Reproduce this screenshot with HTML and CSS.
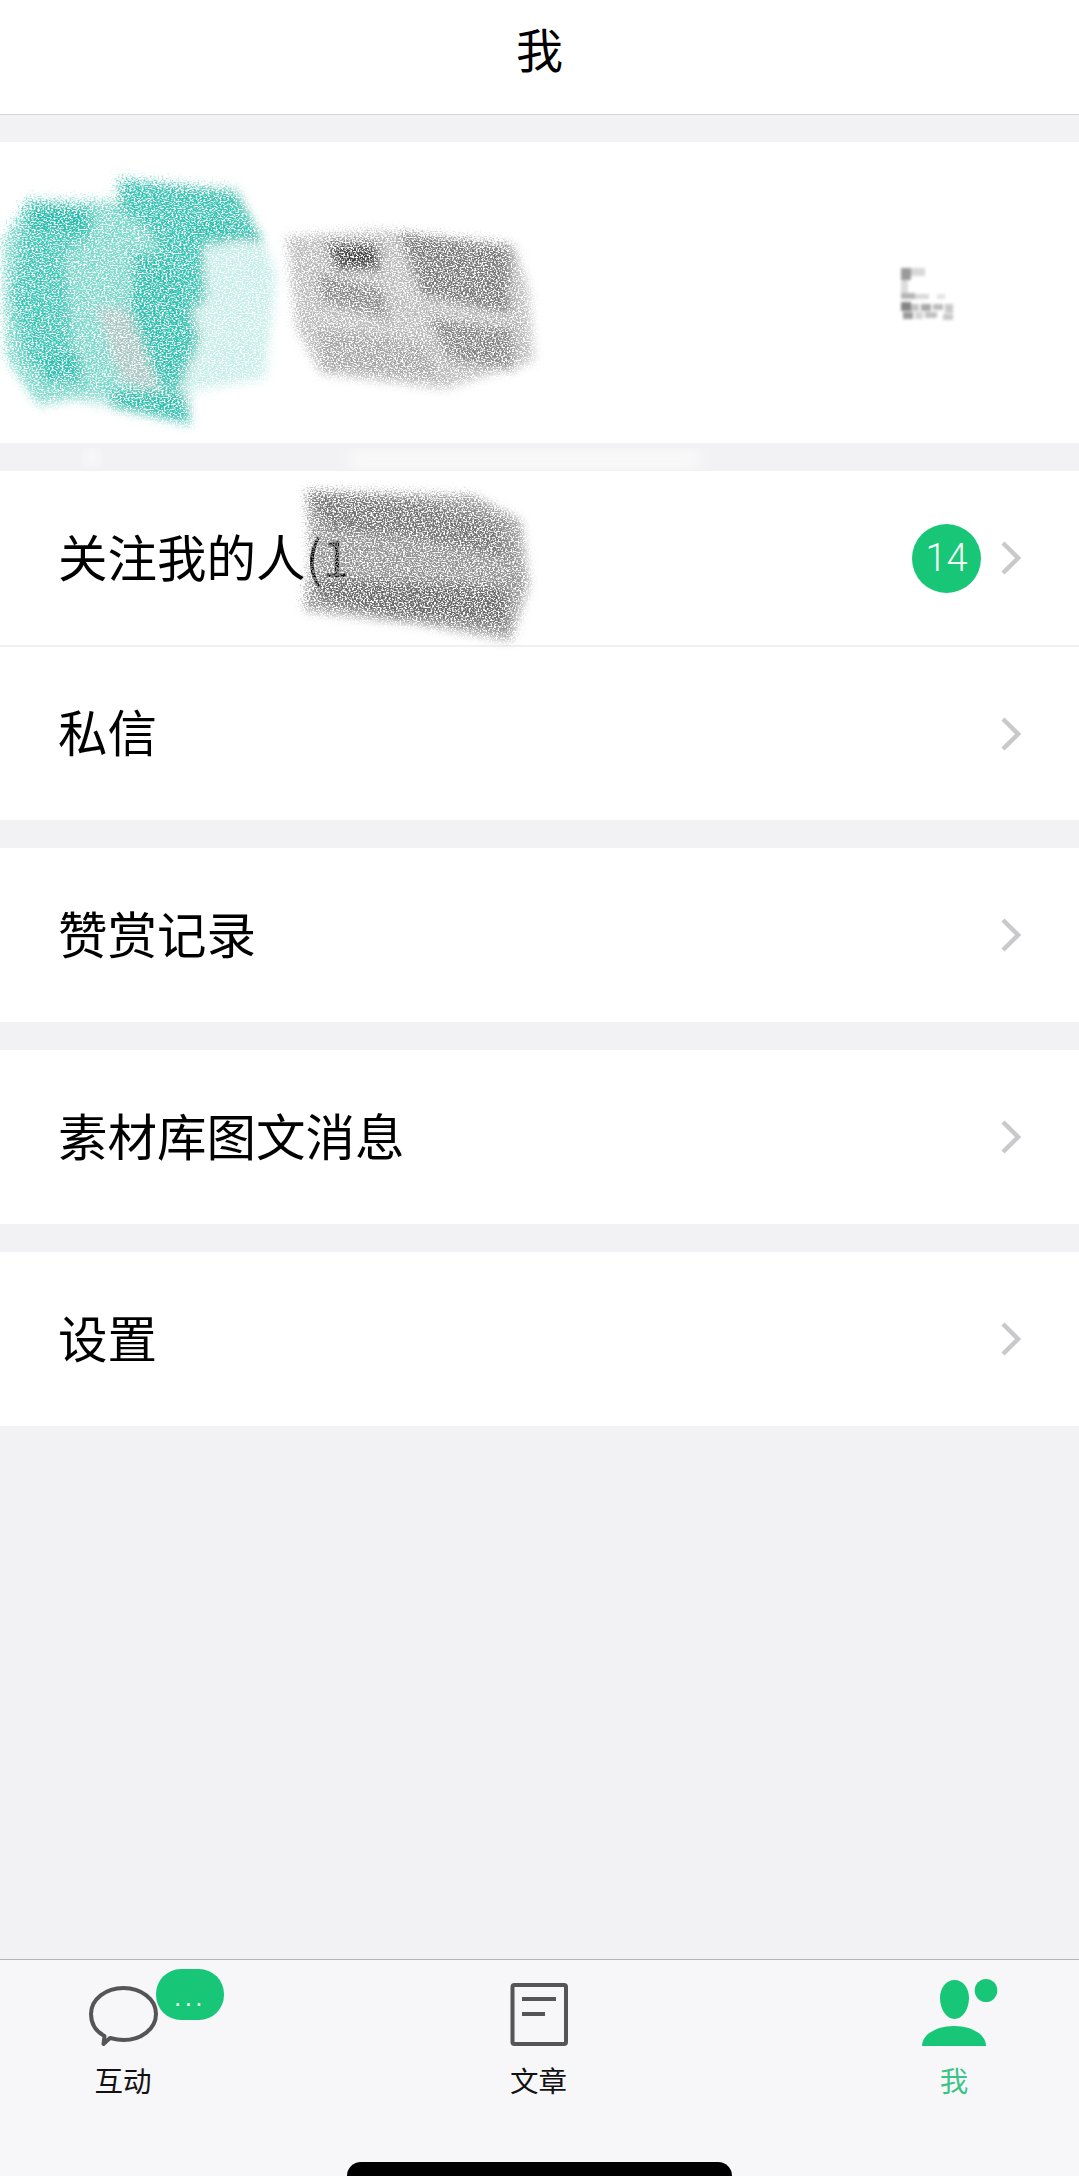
FILE: index.html
```html
<!DOCTYPE html>
<html lang="zh">
<head>
<meta charset="utf-8">
<title>我</title>
<link rel="stylesheet" href="styles.css">
</head>
<body>
<div class="page">
  <header class="topbar">我</header>
  <main class="content">
    <section class="group profile">
      <svg class="mosaic" width="54" height="52" viewBox="0 0 54 52" aria-hidden="true">
        <rect x="0" y="0" width="10" height="12" fill="#9a9a9a"/><rect x="10" y="0" width="14" height="8" fill="#d8d8d8"/>
        <rect x="0" y="12" width="7" height="14" fill="#dcdcdc"/><rect x="0" y="25" width="14" height="6" fill="#b4b4b4"/>
        <rect x="14" y="26" width="14" height="5" fill="#d8d8d8"/><rect x="36" y="26" width="8" height="5" fill="#e2e2e2"/>
        <rect x="0" y="34" width="10" height="9" fill="#858585"/><rect x="10" y="36" width="8" height="7" fill="#c4c4c4"/>
        <rect x="20" y="36" width="10" height="7" fill="#a8a8a8"/><rect x="32" y="36" width="10" height="6" fill="#bbb"/>
        <rect x="44" y="36" width="8" height="9" fill="#c8c8c8"/><rect x="2" y="44" width="10" height="7" fill="#9a9a9a"/>
        <rect x="14" y="44" width="8" height="7" fill="#d4d4d4"/><rect x="24" y="44" width="12" height="6" fill="#c0c0c0"/>
        <rect x="42" y="46" width="10" height="6" fill="#c8c8c8"/>
      </svg>
    </section>
    <section class="group">
      <div class="row">
        <span class="row-title">关注我的人(1</span>
        <span class="count">14</span>
        <svg class="chev" width="22" height="36" viewBox="0 0 22 36" aria-hidden="true"><path d="M3 3 L18 18 L3 33"/></svg>
      </div>
      <div class="row row-next">
        <span class="row-title">私信</span>
        <svg class="chev" width="22" height="36" viewBox="0 0 22 36" aria-hidden="true"><path d="M3 3 L18 18 L3 33"/></svg>
      </div>
    </section>
    <section class="group">
      <div class="row">
        <span class="row-title">赞赏记录</span>
        <svg class="chev" width="22" height="36" viewBox="0 0 22 36" aria-hidden="true"><path d="M3 3 L18 18 L3 33"/></svg>
      </div>
    </section>
    <section class="group">
      <div class="row">
        <span class="row-title">素材库图文消息</span>
        <svg class="chev" width="22" height="36" viewBox="0 0 22 36" aria-hidden="true"><path d="M3 3 L18 18 L3 33"/></svg>
      </div>
    </section>
    <section class="group">
      <div class="row">
        <span class="row-title">设置</span>
        <svg class="chev" width="22" height="36" viewBox="0 0 22 36" aria-hidden="true"><path d="M3 3 L18 18 L3 33"/></svg>
      </div>
    </section>
  </main>
  <nav class="tabbar">
    <div class="tabs">
      <div class="tab">
        <svg class="tab-icon" width="90" height="70" viewBox="0 0 90 70" aria-hidden="true">
          <path class="line" d="M26.5 58 C17 53 13 45 13 36 C13 21 28 10 45.5 10 C63 10 78 21 78 36 C78 51 63 62 45.5 62 C40 62 36 61 32 60 L25.5 66 Z"/>
        </svg>
        <span class="tab-label">互动</span>
        <span class="pill">...</span>
      </div>
      <div class="tab">
        <svg class="tab-icon" width="90" height="70" viewBox="0 0 90 70" aria-hidden="true">
          <rect class="line" x="18.5" y="7" width="53.5" height="59" rx="2"/>
          <path class="line" d="M28 21 H62 M28 36 H51"/>
        </svg>
        <span class="tab-label">文章</span>
      </div>
      <div class="tab tab-active">
        <svg class="tab-icon" width="90" height="70" viewBox="0 0 90 70" aria-hidden="true">
          <path class="solid" d="M45.5 2 C54 2 60 10 60 20 C60 32 53 41 45.5 41 C38 41 31 32 31 20 C31 10 37 2 45.5 2 Z"/>
          <ellipse class="solid" cx="77" cy="12.5" rx="11.3" ry="11.5"/>
          <path class="solid" d="M13 68 C13 56 28 48 45 48 C62 48 77 56 77 68 Z"/>
        </svg>
        <span class="tab-label">我</span>
      </div>
    </div>
    <div class="home-bar"></div>
  </nav>
  <svg class="scribbles" width="1079" height="660" viewBox="0 0 1079 660" aria-hidden="true">
    <defs>
      <filter id="crayon-teal" x="0" y="150" width="330" height="310" filterUnits="userSpaceOnUse">
        <feGaussianBlur in="SourceGraphic" stdDeviation="5" result="b"/>
        <feTurbulence type="fractalNoise" baseFrequency="0.5 0.75" numOctaves="2" seed="4" result="n"/>
        <feDisplacementMap in="b" in2="n" scale="22" result="d"/>
        <feColorMatrix in="n" type="matrix" values="0 0 0 0 0  0 0 0 0 0  0 0 0 0 0  0 0 0 5 -1.75" result="m"/>
        <feComposite in="d" in2="m" operator="in"/>
      </filter>
      <filter id="crayon-gray" x="260" y="200" width="300" height="460" filterUnits="userSpaceOnUse">
        <feGaussianBlur in="SourceGraphic" stdDeviation="5" result="b"/>
        <feTurbulence type="fractalNoise" baseFrequency="0.55 0.8" numOctaves="2" seed="9" result="n"/>
        <feDisplacementMap in="b" in2="n" scale="20" result="d"/>
        <feColorMatrix in="n" type="matrix" values="0 0 0 0 0  0 0 0 0 0  0 0 0 0 0  0 0 0 5 -1.75" result="m"/>
        <feComposite in="d" in2="m" operator="in"/>
      </filter>
      <filter id="soft"><feGaussianBlur stdDeviation="7"/></filter>
    </defs>
    <rect class="smear" x="350" y="450" width="350" height="18" filter="url(#soft)"/>
    <rect class="smear" x="84" y="450" width="16" height="16" filter="url(#soft)"/>
    <g filter="url(#crayon-teal)">
      <path fill="#c6eee8" d="M5 240 L30 200 L115 200 L120 180 L238 188 L262 235 L278 275 L266 380 L195 392 L188 425 L72 402 L38 410 L36 382 L8 362 L2 300 Z"/>
      <path fill="#79d9cc" d="M5 240 L30 200 L120 205 L150 235 L190 340 L180 400 L72 400 L38 405 L8 360 Z"/>
      <path fill="#3cc7b7" d="M30 205 L95 210 L92 240 L66 255 L76 380 L30 368 L14 300 Z"/>
      <path fill="#35c5b4" d="M120 180 L238 192 L262 238 L205 248 L208 300 L184 322 L150 232 L120 212 Z"/>
      <path fill="#2ec1b0" d="M136 252 L176 262 L202 340 L180 392 L162 388 L132 312 Z"/>
      <path fill="#1cbbaa" d="M30 208 L90 212 L88 234 L35 228 Z"/>
      <path fill="#22bdac" d="M188 222 L264 238 L262 244 L200 236 Z"/>
      <path fill="#2cc1b0" d="M40 355 L80 355 L85 385 L45 385 Z"/>
      <path fill="#2cc0af" d="M115 392 L188 395 L192 426 L110 408 Z"/>
      <path fill="#a9c7c3" d="M98 308 L130 312 L160 392 L122 382 Z"/>
    </g>
    <g filter="url(#crayon-gray)">
      <path fill="#bcbcbc" d="M288 238 L385 232 L515 245 L530 290 L535 362 L445 390 L322 375 L298 330 Z"/>
      <path fill="#7a7a7a" d="M400 234 L512 248 L512 315 L425 298 Z"/>
      <path fill="#858585" d="M430 320 L515 330 L515 372 L450 362 Z"/>
      <path fill="#444" d="M328 245 L380 245 L382 272 L338 272 Z"/>
      <path fill="#8a8a8a" d="M318 275 L385 290 L392 322 L322 302 Z"/>
      <path fill="#a5a5a5" d="M320 330 L430 345 L440 380 L325 370 Z"/>
    </g>
    <g filter="url(#crayon-gray)">
      <path fill="#949494" d="M308 492 L475 497 L522 522 L530 585 L512 642 L420 625 L305 612 L312 560 Z"/>
      <path fill="#747474" d="M310 495 L420 505 L500 525 L510 560 L420 540 L330 530 Z"/>
      <path fill="#6a6a6a" d="M320 580 L440 585 L508 590 L510 625 L400 620 L320 600 Z"/>
    </g>
  </svg>
</div>
</body>
</html>
```

FILE: styles.css
```css
* {
  box-sizing: border-box;
}

html,
body {
  margin: 0;
  padding: 0;
}

body {
  background: #f2f2f4;
  font-family: "Noto Sans CJK SC", "Noto Sans", sans-serif;
  color: #000;
}

.page {
  position: relative;
  width: 1079px;
  height: 2176px;
  display: flex;
  flex-direction: column;
  overflow: hidden;
}

.topbar {
  height: 115px;
  flex: none;
  background: #fff;
  border-bottom: 1px solid #d6d6d8;
  font-size: 47px;
  line-height: 96px;
  text-align: center;
}

.content {
  flex: 1;
  display: flex;
  flex-direction: column;
  gap: 28px;
  padding-top: 27px;
}

.group {
  background: #fff;
}

.profile {
  height: 301px;
  display: flex;
  justify-content: flex-end;
  align-items: flex-start;
  padding: 126px 124px 0 0;
}

.mosaic {
  display: block;
  filter: blur(1.5px);
}

.row {
  height: 174px;
  display: flex;
  align-items: center;
  padding: 0 57px 0 58px;
}

.row-next {
  height: 175px;
  border-top: 2px solid #f0f0f3;
}

.row-title {
  flex: 1;
  margin-bottom: 5px;
  font-size: 49.5px;
  line-height: 60px;
}

.count {
  width: 69px;
  height: 69px;
  margin-right: 19px;
  border-radius: 50%;
  background: #17c676;
  color: #f4fbf7;
  font-family: "Roboto", "Liberation Sans", sans-serif;
  font-weight: 300;
  font-size: 38px;
  line-height: 69px;
  text-align: center;
}

.chev {
  display: block;
  flex: none;
}

.chev path {
  fill: none;
  stroke: #c9c9cc;
  stroke-width: 4.5px;
}

.tabbar {
  flex: none;
  height: 217px;
  background: #f7f7f9;
  border-top: 1px solid #b4b4b6;
  display: flex;
  flex-direction: column;
  justify-content: space-between;
}

.tabs {
  display: flex;
  justify-content: space-between;
  padding: 18px 40px 0 38px;
}

.tab {
  position: relative;
  width: 170px;
  display: flex;
  flex-direction: column;
  align-items: center;
}

.tab-icon {
  display: block;
}

.tab-label {
  margin-top: 13px;
  font-size: 28.5px;
  line-height: 38px;
  color: #111;
}

.tab-active .tab-label {
  color: #3cc488;
}

.line {
  fill: none;
  stroke: #555558;
  stroke-width: 4px;
  stroke-linejoin: round;
}

.solid {
  fill: #17c676;
}

.pill {
  position: absolute;
  left: 118px;
  top: -9px;
  width: 68px;
  height: 51px;
  border-radius: 25px;
  background: #17c676;
  color: #e9fbf2;
  font-family: "Liberation Sans", sans-serif;
  font-size: 26px;
  letter-spacing: 3.5px;
  line-height: 56px;
  text-align: center;
}

.home-bar {
  align-self: center;
  width: 385px;
  height: 14px;
  border-radius: 14px 14px 0 0;
  background: #000;
}

.scribbles {
  position: absolute;
  left: 0;
  top: 0;
  pointer-events: none;
}

.smear {
  fill: #fff;
  opacity: 0.6;
}
```
